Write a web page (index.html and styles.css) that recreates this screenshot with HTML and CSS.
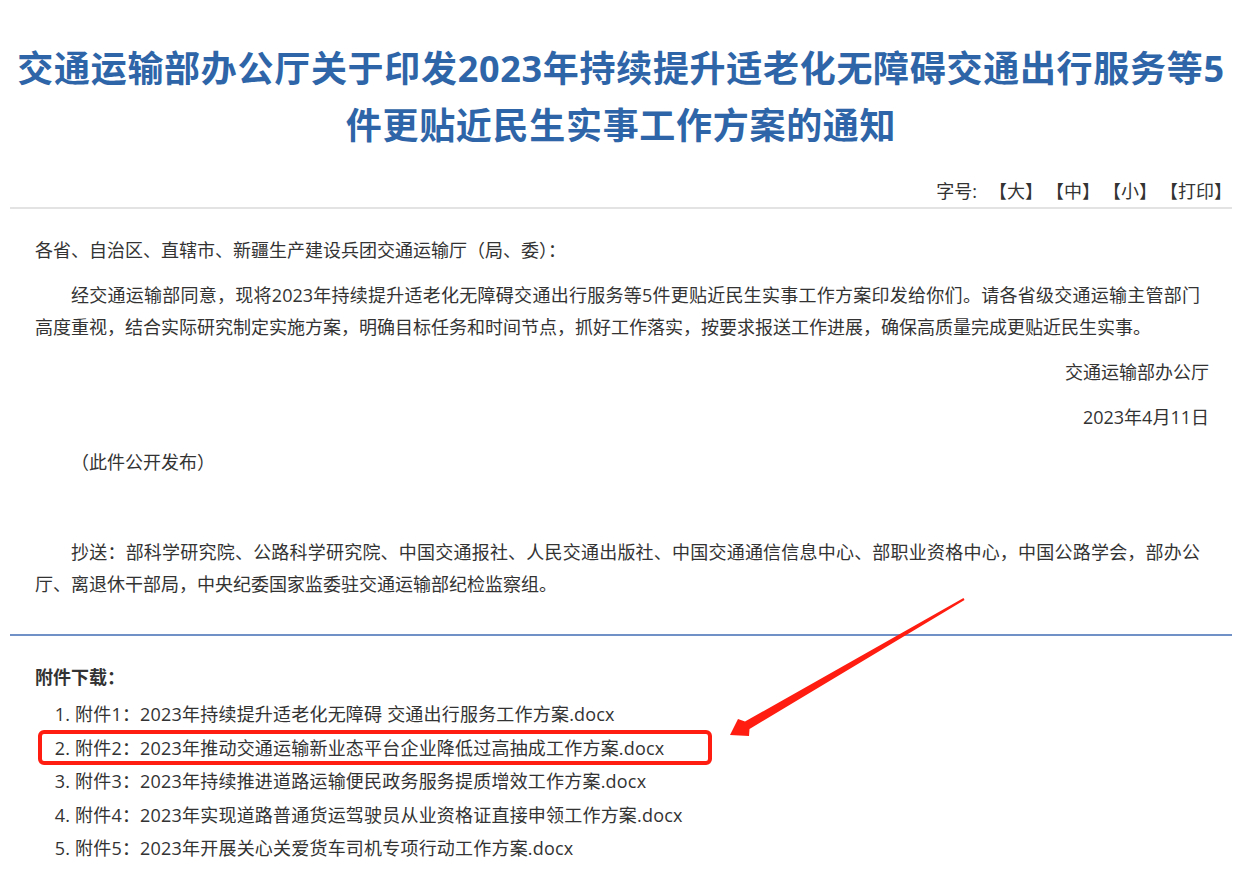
FILE: index.html
```html
<!DOCTYPE html>
<html lang="zh-CN">
<head>
  <meta charset="UTF-8" />
  <meta name="viewport" content="width=device-width, initial-scale=1" />
  <title>交通运输部办公厅关于印发2023年持续提升适老化无障碍交通出行服务等5件更贴近民生实事工作方案的通知</title>
  <link rel="stylesheet" href="styles.css">
</head>
<body>
  <div class="page">
    <h1 class="title">交通运输部办公厅关于印发2023年持续提升适老化无障碍交通出行服务等5件更贴近民生实事工作方案的通知</h1>
    <div class="tools">字号:<a href="#">【大】</a><a href="#">【中】</a><a href="#">【小】</a><a href="#">【打印】</a></div>

    <div class="content">
      <p>各省、自治区、直辖市、新疆生产建设兵团交通运输厅（局、委）：</p>
      <p class="indent">经交通运输部同意，现将2023年持续提升适老化无障碍交通出行服务等5件更贴近民生实事工作方案印发给你们。请各省级交通运输主管部门高度重视，结合实际研究制定实施方案，明确目标任务和时间节点，抓好工作落实，按要求报送工作进展，确保高质量完成更贴近民生实事。</p>
      <p class="sign">交通运输部办公厅</p>
      <p class="sign">2023年4月11日</p>
      <p class="indent">（此件公开发布）</p>
      <p>&nbsp;</p>
      <p class="indent">抄送：部科学研究院、公路科学研究院、中国交通报社、人民交通出版社、中国交通通信信息中心、部职业资格中心，中国公路学会，部办公厅、离退休干部局，中央纪委国家监委驻交通运输部纪检监察组。</p>
    </div>

    <div class="attach">
      <h3>附件下载：</h3>
      <ol>
        <li><a href="#">附件1：2023年持续提升适老化无障碍 交通出行服务工作方案.docx</a></li>
        <li><a href="#">附件2：2023年推动交通运输新业态平台企业降低过高抽成工作方案.docx</a></li>
        <li><a href="#">附件3：2023年持续推进道路运输便民政务服务提质增效工作方案.docx</a></li>
        <li><a href="#">附件4：2023年实现道路普通货运驾驶员从业资格证直接申领工作方案.docx</a></li>
        <li><a href="#">附件5：2023年开展关心关爱货车司机专项行动工作方案.docx</a></li>
      </ol>
    </div>
  </div>

  <!-- annotation drawn over the page -->
  <svg class="mark" width="1254" height="887" viewBox="0 0 1254 887">
    <rect x="40" y="732" width="670" height="31" rx="4" fill="none" stroke="#fe1d10" stroke-width="4" />
    <polygon fill="#fe1d10" points="730,735 738,719 745,721.5 963.5,598 964.5,600 749.5,729 749,736" />
  </svg>
</body>
</html>
```

FILE: styles.css
```css
body { margin: 0; background: #fff; color: #333; font-family: "Open Sans", "Noto Sans CJK SC", sans-serif; }
a { color: #333; text-decoration: none; }
.page { width: 1222px; margin-left: 10px; }
.title { margin: 0; padding-top: 40px; font-size: 36px; line-height: 57px; font-weight: bold; letter-spacing: 0.7px; color: #2e65a8; text-align: center; }
.tools { margin-top: 21px; line-height: 32px; font-size: 18px; text-align: right; border-bottom: 2px solid #e3e3e3; }
.tools a { margin-left: 12px; }
.content { padding: 25px 32px 21px 25px; font-size: 18px; border-bottom: 2px solid #7090c8; }
.content p { margin: 0 0 13px; line-height: 32px; text-align: justify; }
.content .indent { text-indent: 2em; }
.content .sign { text-align: right; margin-right: -9px; }
.attach { padding: 25px 0 0 25px; font-size: 18px; }
.attach h3 { margin: 0; line-height: 32px; font-size: 18px; font-weight: bold; }
.attach ol { margin: 5px 0 0; padding-left: 40px; }
.attach li { line-height: 33.5px; letter-spacing: 0.2px; }
.mark { position: absolute; top: 0; left: 0; pointer-events: none; }
```
